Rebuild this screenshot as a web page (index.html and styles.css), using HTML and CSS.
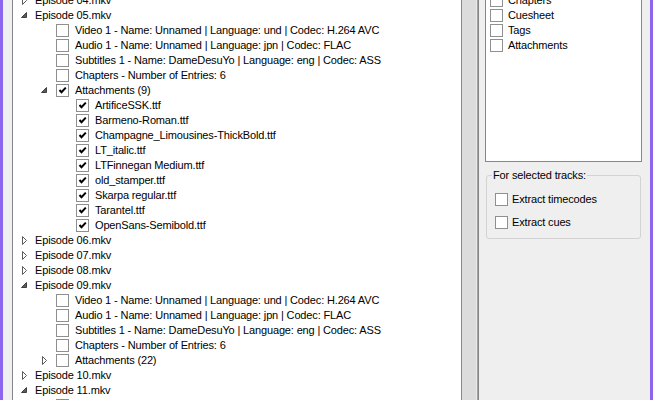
FILE: index.html
```html
<!DOCTYPE html>
<html lang="en">
<head>
    <meta charset="UTF-8">
    <title>Extract tracks</title>
    <link rel="stylesheet" href="styles.css">
</head>
<body>

<svg class="defs" width="0" height="0">
    <symbol id="tri-closed" viewBox="0 0 20 15">
        <path d="M7.5 3.5 L11.5 7.5 L7.5 11.5 Z" fill="#fff" stroke="#5a5a5a"/>
    </symbol>
    <symbol id="tri-open" viewBox="0 0 20 15">
        <path d="M11.5 4.5 L11.5 9.5 L6.5 9.5 Z" fill="#5c5c5c" stroke="#404040"/>
    </symbol>
    <symbol id="tick" viewBox="0 0 11 11">
        <path d="M2.5 5 L4.5 7.2 L8.8 2.6" fill="none" stroke="#000" stroke-width="2"/>
    </symbol>
</svg>

<div class="window">
    <div class="gutter"></div>

    <div class="tree">
        <div class="rows">
            <div class="row l0"><svg class="exp"><use href="#tri-closed"/></svg>Episode 04.mkv</div>
            <div class="row l0"><svg class="exp"><use href="#tri-open"/></svg>Episode 05.mkv</div>
            <div class="row l1"><span class="exp"></span><span class="cb"></span>Video 1 - Name: Unnamed | Language: und | Codec: H.264 AVC</div>
            <div class="row l1"><span class="exp"></span><span class="cb"></span>Audio 1 - Name: Unnamed | Language: jpn | Codec: FLAC</div>
            <div class="row l1"><span class="exp"></span><span class="cb"></span>Subtitles 1 - Name: DameDesuYo | Language: eng | Codec: ASS</div>
            <div class="row l1"><span class="exp"></span><span class="cb"></span>Chapters - Number of Entries: 6</div>
            <div class="row l1"><svg class="exp"><use href="#tri-open"/></svg><span class="cb"><svg><use href="#tick"/></svg></span>Attachments (9)</div>
            <div class="row l2"><span class="exp"></span><span class="cb"><svg><use href="#tick"/></svg></span>ArtificeSSK.ttf</div>
            <div class="row l2"><span class="exp"></span><span class="cb"><svg><use href="#tick"/></svg></span>Barmeno-Roman.ttf</div>
            <div class="row l2"><span class="exp"></span><span class="cb"><svg><use href="#tick"/></svg></span>Champagne_Limousines-ThickBold.ttf</div>
            <div class="row l2"><span class="exp"></span><span class="cb"><svg><use href="#tick"/></svg></span>LT_italic.ttf</div>
            <div class="row l2"><span class="exp"></span><span class="cb"><svg><use href="#tick"/></svg></span>LTFinnegan Medium.ttf</div>
            <div class="row l2"><span class="exp"></span><span class="cb"><svg><use href="#tick"/></svg></span>old_stamper.ttf</div>
            <div class="row l2"><span class="exp"></span><span class="cb"><svg><use href="#tick"/></svg></span>Skarpa regular.ttf</div>
            <div class="row l2"><span class="exp"></span><span class="cb"><svg><use href="#tick"/></svg></span>Tarantel.ttf</div>
            <div class="row l2"><span class="exp"></span><span class="cb"><svg><use href="#tick"/></svg></span>OpenSans-Semibold.ttf</div>
            <div class="row l0"><svg class="exp"><use href="#tri-closed"/></svg>Episode 06.mkv</div>
            <div class="row l0"><svg class="exp"><use href="#tri-closed"/></svg>Episode 07.mkv</div>
            <div class="row l0"><svg class="exp"><use href="#tri-closed"/></svg>Episode 08.mkv</div>
            <div class="row l0"><svg class="exp"><use href="#tri-open"/></svg>Episode 09.mkv</div>
            <div class="row l1"><span class="exp"></span><span class="cb"></span>Video 1 - Name: Unnamed | Language: und | Codec: H.264 AVC</div>
            <div class="row l1"><span class="exp"></span><span class="cb"></span>Audio 1 - Name: Unnamed | Language: jpn | Codec: FLAC</div>
            <div class="row l1"><span class="exp"></span><span class="cb"></span>Subtitles 1 - Name: DameDesuYo | Language: eng | Codec: ASS</div>
            <div class="row l1"><span class="exp"></span><span class="cb"></span>Chapters - Number of Entries: 6</div>
            <div class="row l1"><svg class="exp"><use href="#tri-closed"/></svg><span class="cb"></span>Attachments (22)</div>
            <div class="row l0"><svg class="exp"><use href="#tri-closed"/></svg>Episode 10.mkv</div>
            <div class="row l0"><svg class="exp"><use href="#tri-open"/></svg>Episode 11.mkv</div>
            <div class="row l1"><span class="exp"></span><span class="cb"></span>Video 1 - Name: Unnamed | Language: und | Codec: H.264 AVC</div>
        </div>
    </div>

    <div class="splitter"></div>

    <div class="side">
        <div class="listbox">
            <div class="rows">
                <div class="opt"><span class="cb"></span>Chapters</div>
                <div class="opt"><span class="cb"></span>Cuesheet</div>
                <div class="opt"><span class="cb"></span>Tags</div>
                <div class="opt"><span class="cb"></span>Attachments</div>
            </div>
        </div>

        <fieldset class="group">
            <legend>For selected tracks:</legend>
            <div class="opt"><span class="cb"></span>Extract timecodes</div>
            <div class="opt"><span class="cb"></span>Extract cues</div>
        </fieldset>
    </div>
</div>

</body>
</html>
```

FILE: styles.css
```css
html, body {
    margin: 0;
    padding: 0;
    background: #efefef;
}
.defs {
    position: absolute;
}
.window {
    display: flex;
    height: 400px;
    overflow: hidden;
    border-left: 3px solid #8c64f0;
    border-right: 3px solid #8c64f0;
    background: #efefef;
    font: 11px/15px "Liberation Sans", Arial, sans-serif;
    letter-spacing: -0.15px;
    color: #000;
}
.gutter {
    width: 9px;
    flex: none;
}

/* file tree */
.tree {
    width: 450px;
    flex: none;
    box-sizing: border-box;
    background: #fff;
    border-left: 1px solid #828790;
    border-right: 1px solid #828790;
    overflow: hidden;
}
.rows {
    margin-top: -7px;
}
.row {
    display: flex;
    align-items: center;
    height: 15px;
    white-space: nowrap;
}
.l0 { padding-left: 2px; }
.l1 { padding-left: 22px; }
.l2 { padding-left: 42px; }
.exp {
    width: 20px;
    height: 15px;
    flex: none;
}
.cb {
    width: 13px;
    height: 13px;
    flex: none;
    box-sizing: border-box;
    border: 1px solid #8e8f8f;
    background: #fff;
    margin: 0 6px 0 1px;
}
.cb svg {
    display: block;
    width: 11px;
    height: 11px;
}

/* splitter between the panes */
.splitter {
    width: 17px;
    flex: none;
    background: linear-gradient(to right, #dcdcdc 14px, #e9e9e9 14px 15px, #a3a3a3 15px 16px, #858585 16px);
}

/* options pane */
.side {
    flex: 1;
    padding: 0 8px 0 6px;
}
.listbox {
    height: 162px;
    box-sizing: border-box;
    background: #fff;
    border: 1px solid #828790;
    border-top: none;
    padding-left: 4px;
    overflow: hidden;
}
.opt {
    display: flex;
    align-items: center;
    height: 15px;
    white-space: nowrap;
}
.listbox .cb {
    margin: 0 5px 0 0;
}
.group {
    margin: 6px 1px 0;
    padding: 9px 0 8px 8px;
    border: 1px solid #d3d3d3;
    border-radius: 3px;
    min-width: 0;
}
.group legend {
    padding: 0 1px;
    margin-left: -3px;
}
.group .opt + .opt {
    margin-top: 8px;
}
.group .cb {
    margin: 0 4px 0 0;
}
```
